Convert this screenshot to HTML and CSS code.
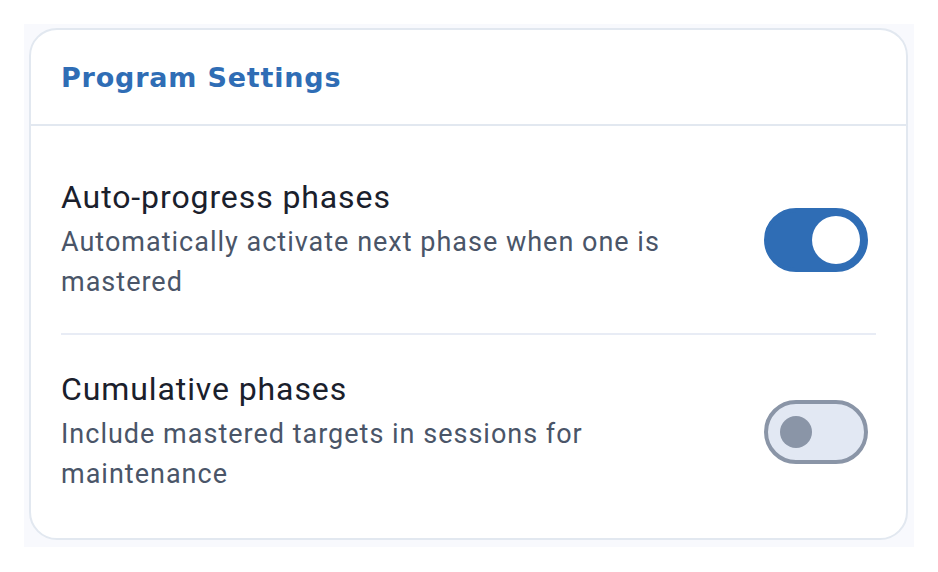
FILE: index.html
```html
<!DOCTYPE html>
<html lang="en">

<head>
    <meta charset="UTF-8">
    <meta name="viewport" content="width=device-width, initial-scale=1.0">
    <title>Program Settings</title>
    <link rel="stylesheet" href="styles.css">
</head>

<body>
    <div class="page">
        <div class="card">
            <div class="card-header">
                <h2>Program Settings</h2>
            </div>

            <div class="card-body">
                <div class="setting">
                    <div class="setting-text">
                        <div class="setting-title">Auto-progress phases</div>
                        <div class="setting-desc">Automatically activate next phase when one is mastered</div>
                    </div>
                    <button class="toggle on" aria-label="Auto-progress phases"><span class="knob"></span></button>
                </div>

                <div class="setting">
                    <div class="setting-text">
                        <div class="setting-title">Cumulative phases</div>
                        <div class="setting-desc">Include mastered targets in sessions for maintenance</div>
                    </div>
                    <button class="toggle" aria-label="Cumulative phases"><span class="knob"></span></button>
                </div>
            </div>
        </div>
    </div>
</body>

</html>
```

FILE: styles.css
```css
body {
    margin: 0;
    padding: 0;
    background: #fff;
    font-family: 'Roboto', 'Liberation Sans', sans-serif;
}

.page {
    margin: 24px 0 0 24px;
    width: 890px;
    height: 523px;
    box-sizing: border-box;
    padding: 4px 6px 7px 5px;
    background: #f8f9fd;
}

.card {
    height: 100%;
    box-sizing: border-box;
    background: #fff;
    border: 2px solid #e2e8f0;
    border-radius: 28px;
    overflow: hidden;
}

/* Header */
.card-header {
    height: 94px;
    padding: 0 30px;
    display: flex;
    align-items: center;
    border-bottom: 2px solid #e2e8f0;
}

.card-header h2 {
    margin: 0;
    font-family: 'DejaVu Sans', 'Liberation Sans', sans-serif;
    font-size: 27px;
    font-weight: 700;
    letter-spacing: 0.8px;
    color: #2f6db5;
}

/* Rows */
.card-body {
    padding: 15px 30px 0;
}

.setting {
    display: flex;
    align-items: center;
    justify-content: space-between;
    padding: 36px 0 31px;
}

.setting + .setting {
    border-top: 2px solid #e8ecf5;
    padding-top: 34px;
}

.setting-text {
    max-width: 660px;
}

.setting-title {
    font-size: 32px;
    line-height: 40px;
    letter-spacing: 0.9px;
    color: #1a202c;
}

.setting-desc {
    margin-top: 5px;
    font-size: 27px;
    line-height: 40px;
    letter-spacing: 1px;
    color: #4a5568;
}

/* Toggle switch */
.toggle {
    position: relative;
    flex: none;
    width: 104px;
    height: 64px;
    margin-right: 8px;
    padding: 0;
    box-sizing: border-box;
    border: 4px solid #8a95a7;
    border-radius: 32px;
    background: #e2e8f3;
    cursor: pointer;
}

.toggle .knob {
    position: absolute;
    top: 12px;
    left: 12px;
    width: 32px;
    height: 32px;
    border-radius: 50%;
    background: #8a95a7;
}

.toggle.on {
    border-color: #2f6db5;
    background: #2f6db5;
}

.toggle.on .knob {
    top: 4px;
    left: auto;
    right: 4px;
    width: 48px;
    height: 48px;
    background: #fff;
}
```
